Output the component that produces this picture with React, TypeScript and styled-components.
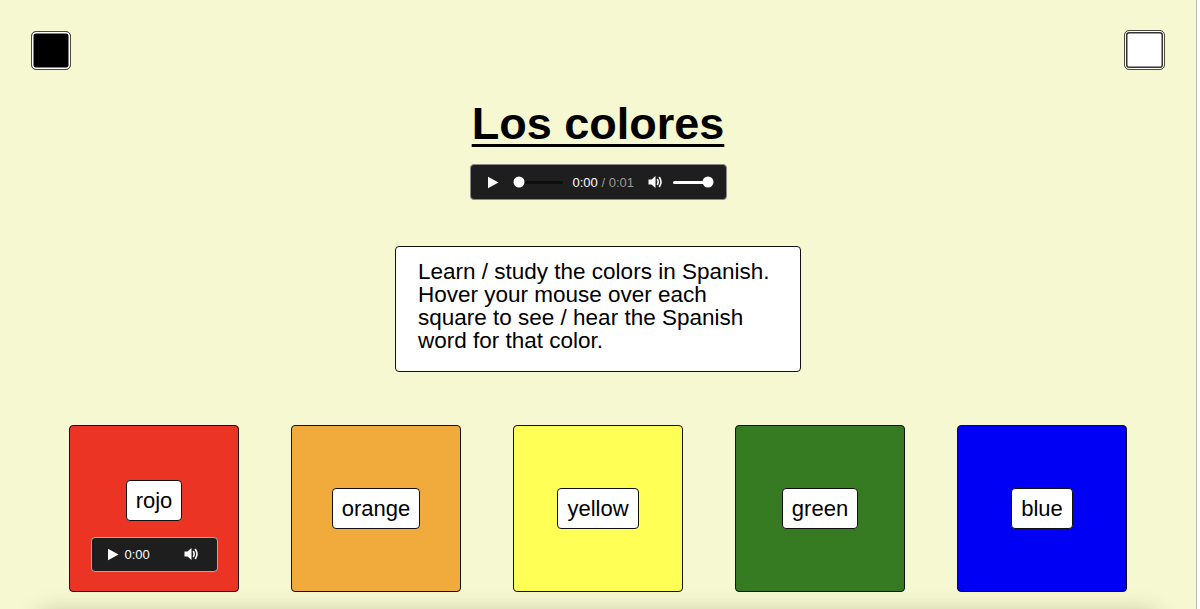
import React from "react";
import styled, { createGlobalStyle } from "styled-components";

const Global = createGlobalStyle`
  html, body { margin: 0; padding: 0; height: 100%; overflow: hidden; background: #ffffff; }
  body { font-family: "Liberation Sans", Arial, Helvetica, sans-serif; }
  #root { height: 100%; }
`;

const Frame = styled.div`
  display: flex;
  height: 100%;
`;

const Page = styled.main`
  flex: 0 0 1196px;
  height: 100%;
  background: #f6f8d2;
  border-right: 1px solid #b9b9b9;
  display: flex;
  flex-direction: column;
  align-items: center;
  overflow: hidden;
  & > * { flex-shrink: 0; }
`;

const TopBar = styled.div`
  align-self: stretch;
  display: flex;
  justify-content: space-between;
  align-items: flex-start;
  padding: 30px 31px 0 31px;
`;

const ThemeButton = styled.button<{ $dark?: boolean }>`
  width: ${(p) => (p.$dark ? "40px" : "41px")};
  height: ${(p) => (p.$dark ? "39px" : "40px")};
  margin-top: ${(p) => (p.$dark ? "1px" : "0")};
  padding: 0;
  border-radius: 5px;
  border: 1px solid #4a4a3a;
  background: ${(p) => (p.$dark ? "#000" : "#fff")};
  box-shadow: ${(p) =>
    p.$dark
      ? "inset 0 0 0 1.5px #fff"
      : "inset 0 0 0 1px #fff, inset 0 0 0 2.5px #333"};
  cursor: pointer;
`;

const Title = styled.h1`
  margin: 28px 0 0 0;
  font-size: 45px;
  font-weight: 700;
  line-height: normal;
  color: #000;
  text-decoration: underline;
  text-decoration-thickness: 3px;
  text-underline-offset: 5px;
`;

const Player = styled.div<{ $small?: boolean }>`
  box-sizing: border-box;
  width: ${(p) => (p.$small ? "127px" : "257px")};
  height: ${(p) => (p.$small ? "35px" : "36px")};
  flex-shrink: 0;
  background: #1e1e1e;
  border: 1px solid ${(p) => (p.$small ? "#a9aeae" : "#8a8a8a")};
  border-radius: 4px;
  display: flex;
  align-items: center;
  padding: ${(p) => (p.$small ? "0 0 0 15px" : "0 0 0 16px")};
  color: #fff;
  font-size: 13px;
`;

const MainPlayer = styled(Player)`
  margin-top: 14px;
`;

const Track = styled.div<{ $w: number; $light?: boolean }>`
  position: relative;
  width: ${(p) => p.$w}px;
  height: 3px;
  border-radius: 2px;
  background: ${(p) => (p.$light ? "#ffffff" : "#0e0e0e")};
`;

const Knob = styled.span`
  position: absolute;
  top: 50%;
  width: 11px;
  height: 11px;
  border-radius: 50%;
  background: #fff;
  transform: translate(-50%, -50%);
`;

const Time = styled.span`
  font-size: 13px;
  color: #fff;
  white-space: nowrap;
`;

const Dim = styled.span`
  color: #9a9a9a;
`;

const Spacer = styled.span<{ $w: number }>`
  flex: 0 0 ${(p) => p.$w}px;
`;

const Info = styled.div`
  box-sizing: border-box;
  margin-top: 46px;
  width: 406px;
  background: #fff;
  border: 1px solid #111;
  border-radius: 4px;
  padding: 13px 20px 19px 22px;
  font-size: 22.5px;
  line-height: 23px;
  color: #000;
`;

const Squares = styled.div`
  margin-top: 53px;
  display: flex;
  gap: 52px;
  justify-content: center;
`;

const Square = styled.div<{ $bg: string; $withAudio?: boolean }>`
  box-sizing: border-box;
  width: 170px;
  height: 167px;
  background: ${(p) => p.$bg};
  border: 1px solid #111;
  border-radius: 4px;
  display: flex;
  flex-direction: column;
  align-items: center;
  justify-content: center;
  gap: 16px;
  padding-top: ${(p) => (p.$withAudio ? "34px" : "0")};
`;

const Label = styled.div`
  box-sizing: border-box;
  background: #fff;
  border: 1px solid #111;
  border-radius: 4px;
  padding: 7px 9px;
  font-size: 22px;
  line-height: 25px;
  color: #000;
`;

const Shelf = styled.div`
  align-self: stretch;
  margin: 22px 40px 0 40px;
  height: 200px;
  background: #f6f8d2;
  box-shadow: 0 0 22px rgba(60, 60, 20, 0.3);
`;

const PlayIcon = ({ size = 12 }: { size?: number }) => (
  <svg width={size} height={size + 1} viewBox="0 0 12 13">
    <path d="M1 0.8 L11.5 6.5 L1 12.2 Z" fill="#fff" />
  </svg>
);

const VolumeIcon = () => (
  <svg width="15" height="14" viewBox="0 0 15 14">
    <path d="M0.5 4.5 H3.5 L7.5 1 V13 L3.5 9.5 H0.5 Z" fill="#fff" />
    <path d="M9.5 4.5 Q11 7 9.5 9.5" stroke="#fff" strokeWidth="1.6" fill="none" strokeLinecap="round" />
    <path d="M11.5 2.5 Q14.5 7 11.5 11.5" stroke="#fff" strokeWidth="1.6" fill="none" strokeLinecap="round" />
  </svg>
);

const colors = [
  { name: "rojo", bg: "#ec3425", audio: true },
  { name: "orange", bg: "#f1aa3c" },
  { name: "yellow", bg: "#ffff55" },
  { name: "green", bg: "#367b22" },
  { name: "blue", bg: "#0000f5" },
];

export default function App() {
  return (
    <>
      <Global />
      <Frame>
        <Page>
          <TopBar>
            <ThemeButton $dark aria-label="dark theme" />
            <ThemeButton aria-label="light theme" />
          </TopBar>
          <Title>Los colores</Title>
          <MainPlayer>
            <PlayIcon />
            <Spacer $w={20} />
            <Track $w={44}>
              <Knob style={{ left: "0px" }} />
            </Track>
            <Spacer $w={10} />
            <Time>
              0:00 <Dim>/ 0:01</Dim>
            </Time>
            <Spacer $w={14} />
            <VolumeIcon />
            <Spacer $w={10} />
            <Track $w={38} $light>
              <Knob style={{ left: "35px" }} />
            </Track>
          </MainPlayer>
          <Info>
            Learn / study the colors in Spanish. Hover your mouse over each square to see / hear the
            Spanish word for that color.
          </Info>
          <Squares>
            {colors.map((c) => (
              <Square key={c.name} $bg={c.bg} $withAudio={c.audio}>
                <Label>{c.name}</Label>
                {c.audio && (
                  <Player $small>
                    <PlayIcon />
                    <Spacer $w={6} />
                    <Time>0:00</Time>
                    <Spacer $w={34} />
                    <VolumeIcon />
                  </Player>
                )}
              </Square>
            ))}
          </Squares>
          <Shelf />
        </Page>
      </Frame>
    </>
  );
}
